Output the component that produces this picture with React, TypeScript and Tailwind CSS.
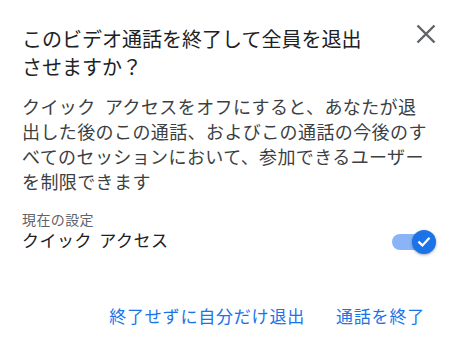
export default function App() {
  const font = { fontFamily: '"Noto Sans CJK JP", "Noto Sans", sans-serif' };

  return (
    <div style={font} className="w-[462px] h-[351px] bg-white px-[22px] pt-[25px] overflow-hidden">
      {/* Header */}
      <div className="flex items-start">
        <h1 className="w-[352px] text-[20px] leading-[28px] text-[#202124] font-normal">
          このビデオ通話を終了して全員を退出させますか？
        </h1>
        <button className="ml-auto mr-[4px] mt-[-1px] text-[#5f6368]" title="閉じる">
          <svg width="20" height="20" viewBox="0 0 20 20" fill="none" stroke="currentColor" strokeWidth="2.4">
            <path d="M1.5 1.5L18.5 18.5M18.5 1.5L1.5 18.5" />
          </svg>
        </button>
      </div>

      {/* Description */}
      <p className="mt-[13px] w-[410px] text-[18px] leading-[25px] tracking-[0.4px] [word-spacing:5px] text-[#3c4043]">
        クイック アクセスをオフにすると、あなたが退出した後のこの通話、およびこの通話の今後のすべてのセッションにおいて、参加できるユーザーを制限できます
      </p>

      {/* Setting */}
      <div className="mt-[16px] flex items-start justify-between">
        <div>
          <p className="text-[14px] leading-[19px] tracking-[0.4px] text-[#5f6368]">現在の設定</p>
          <p className="mt-[1px] text-[17px] leading-[20px] tracking-[0.5px] [word-spacing:3px] text-[#202124]">クイック アクセス</p>
        </div>
        <div className="relative mt-[20px] mr-[4px] w-[44px] h-[24px]">
          <div className="absolute left-0 top-[4px] w-[38px] h-[16px] rounded-full bg-[#8ab4f8]" />
          <div className="absolute right-0 top-0 w-[24px] h-[24px] rounded-full bg-[#1a73e8] shadow-[0_1px_3px_rgba(0,0,0,0.35)] flex items-center justify-center">
            <svg width="16" height="16" viewBox="0 0 16 16" fill="none" stroke="white" strokeWidth="2.2" strokeLinecap="square">
              <path d="M3.2 8.4L6.4 11.4L12.8 4.6" />
            </svg>
          </div>
        </div>
      </div>

      {/* Actions */}
      <div className="mt-[50px] flex justify-end gap-[15px] pr-[7px]">
        <button className="px-2 text-[17px] leading-[24px] tracking-[0.8px] text-[#1a73e8]">終了せずに自分だけ退出</button>
        <button className="px-2 text-[17px] leading-[24px] tracking-[0.8px] text-[#1a73e8]">通話を終了</button>
      </div>
    </div>
  );
}
